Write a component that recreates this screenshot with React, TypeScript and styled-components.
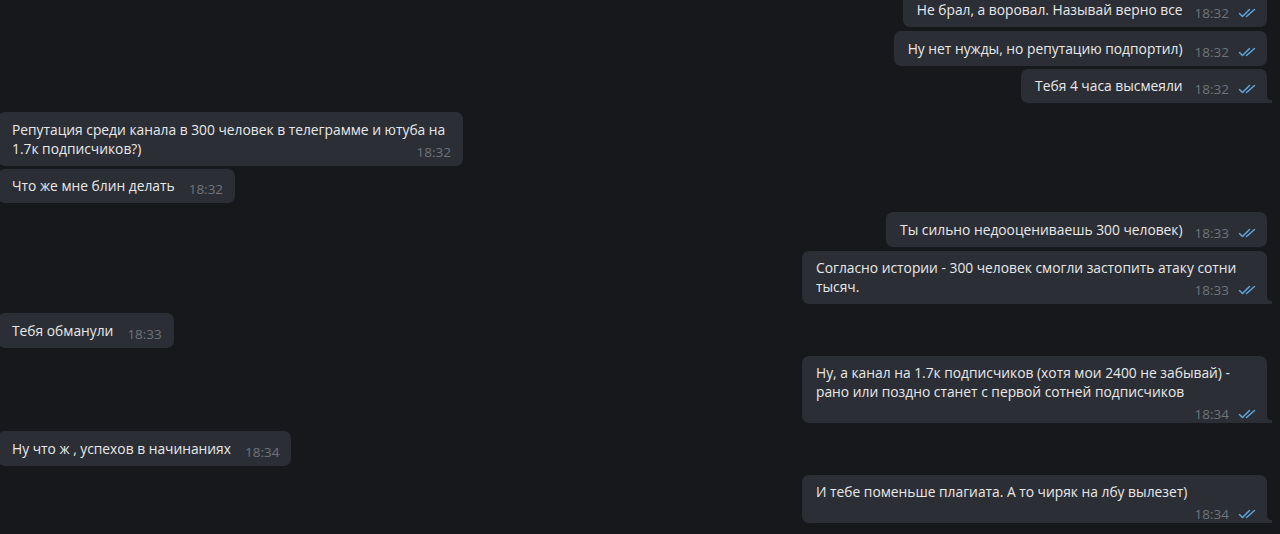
import React from "react";
import styled, { createGlobalStyle, css } from "styled-components";

const Global = createGlobalStyle`
  html, body { margin: 0; padding: 0; background: #17181c; }
  body { font-family: "Open Sans", "Noto Sans", sans-serif; -webkit-font-smoothing: antialiased; }
`;

const Page = styled.div`
  width: 1280px;
  height: 534px;
  overflow: hidden;
  background: #17181c;
`;

const List = styled.div`
  display: flex;
  flex-direction: column;
  margin-top: -7.5px;
  padding: 0 13px 0 0;
`;

const Row = styled.div<{ $out: boolean; $gap: number }>`
  display: flex;
  justify-content: ${(p) => (p.$out ? "flex-end" : "flex-start")};
  margin-top: ${(p) => p.$gap}px;
  ${(p) => !p.$out && css`margin-left: -2px;`}
`;

const Bubble = styled.div<{ $out: boolean; $tail: boolean }>`
  position: relative;
  display: flow-root;
  box-sizing: border-box;
  max-width: 465px;
  padding: 7.75px ${(p) => (p.$out ? 9 : 12)}px 7.75px 14px;
  background: #2b2e34;
  border-radius: 7px;
  color: #e9e9ea;
  font-size: 13.8px;
  line-height: 19px;
  ${(p) =>
    p.$tail &&
    p.$out &&
    css`
      border-bottom-right-radius: 0;
      &::after {
        content: "";
        position: absolute;
        right: -5px;
        bottom: 0;
        width: 5px;
        height: 8px;
        background: radial-gradient(circle at 100% 0, transparent 5px, #2b2e34 5.5px);
      }
    `}
`;

const Text = styled.span`
  white-space: pre-wrap;
`;

const Meta = styled.span<{ $out: boolean }>`
  float: right;
  display: flex;
  align-items: center;
  gap: 9px;
  height: 14px;
  margin: 6px 0 -6px ${(p) => (p.$out ? 12 : 14)}px;
  font-size: 13.5px;
  line-height: 14px;
  color: #6e747c;
`;

const Checks = () => (
  <svg width="20" height="10" viewBox="0 0 20 10" fill="none">
    <path d="M1.5 5.5 L4.5 8.5 L11.5 1.5" stroke="#5ea6df" strokeWidth="1.5" strokeLinecap="round" strokeLinejoin="round" />
    <path d="M8.5 8.5 L16.5 1.5" stroke="#5ea6df" strokeWidth="1.5" strokeLinecap="round" />
  </svg>
);

type Msg = { out: boolean; text: string; time: string; gap: number; tail: boolean };

const messages: Msg[] = [
  { out: true, text: "Не брал, а воровал. Называй верно все", time: "18:32", gap: 0, tail: false },
  { out: true, text: "Ну нет нужды, но репутацию подпортил)", time: "18:32", gap: 4, tail: false },
  { out: true, text: "Тебя 4 часа высмеяли", time: "18:32", gap: 3, tail: true },
  { out: false, text: "Репутация среди канала в 300 человек в телеграмме и ютуба на 1.7к подписчиков?)", time: "18:32", gap: 9, tail: false },
  { out: false, text: "Что же мне блин делать", time: "18:32", gap: 3, tail: true },
  { out: true, text: "Ты сильно недооцениваешь 300 человек)", time: "18:33", gap: 9, tail: false },
  { out: true, text: "Согласно истории - 300 человек смогли застопить атаку сотни тысяч.", time: "18:33", gap: 4, tail: true },
  { out: false, text: "Тебя обманули", time: "18:33", gap: 9, tail: true },
  { out: true, text: "Ну, а канал на 1.7к подписчиков (хотя мои 2400 не забывай) - рано или поздно станет с первой сотней подписчиков", time: "18:34", gap: 8, tail: true },
  { out: false, text: "Ну что ж , успехов в начинаниях", time: "18:34", gap: 8, tail: true },
  { out: true, text: "И тебе поменьше плагиата. А то чиряк на лбу вылезет)", time: "18:34", gap: 9, tail: true },
];

export default function App() {
  return (
    <Page>
      <Global />
      <List>
        {messages.map((m, i) => (
          <Row key={i} $out={m.out} $gap={m.gap}>
            <Bubble $out={m.out} $tail={m.tail}>
              <Text>{m.text}</Text>
              <Meta $out={m.out}>
                {m.time}
                {m.out && <Checks />}
              </Meta>
            </Bubble>
          </Row>
        ))}
      </List>
    </Page>
  );
}
